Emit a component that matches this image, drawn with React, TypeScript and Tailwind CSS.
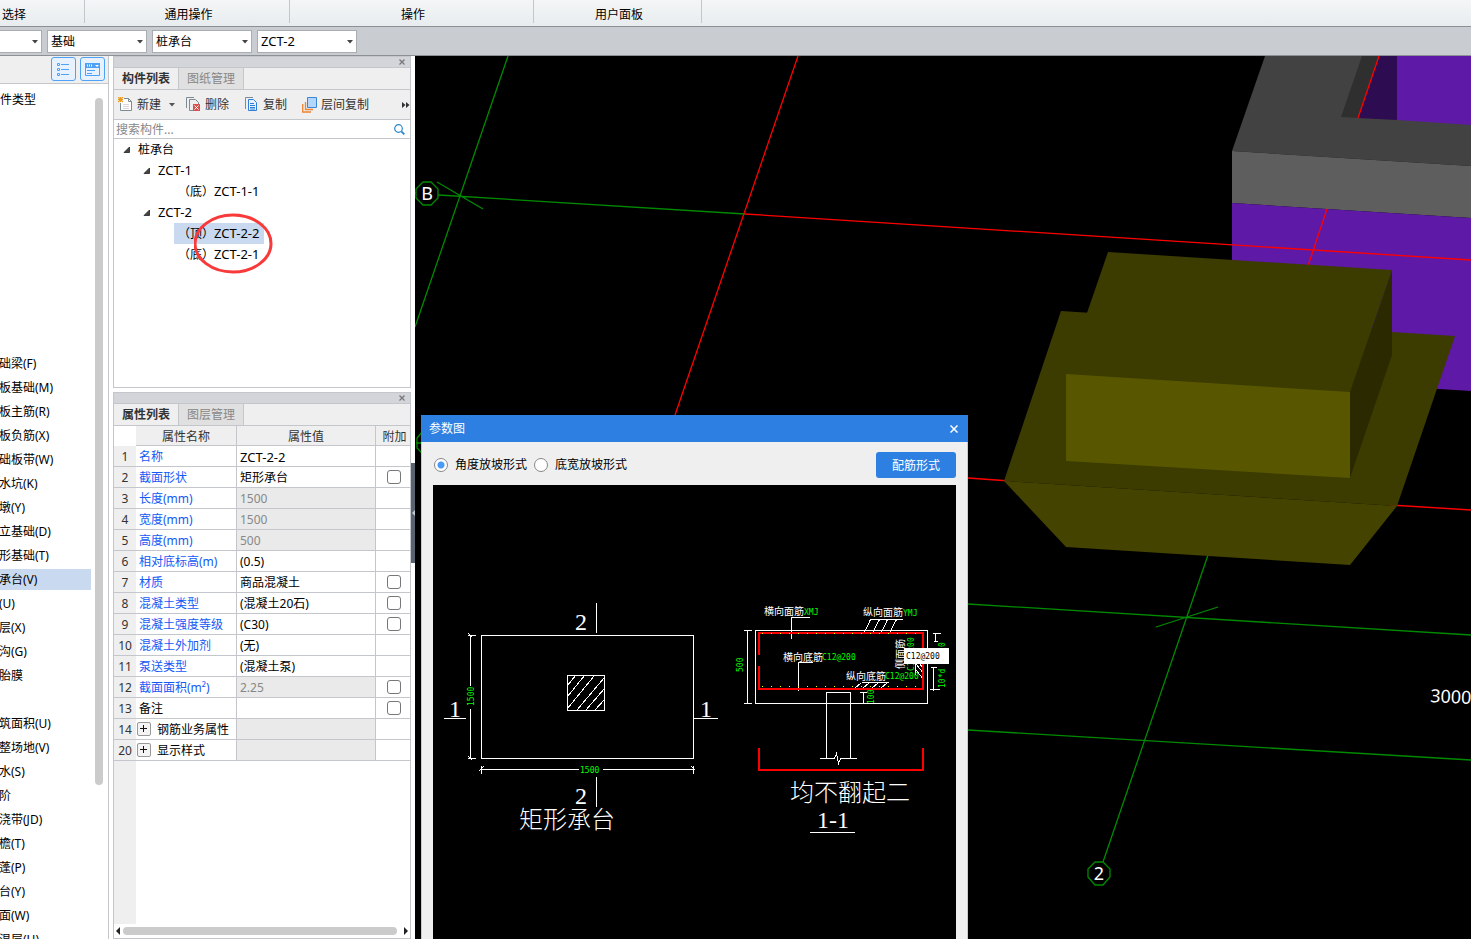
import type { ReactNode } from "react";

const ribbonGroups = [
  { name: "选择", className: "w-[85px] justify-start pl-[2px]" },
  { name: "通用操作", className: "w-[205px] justify-center pl-[3px]" },
  { name: "操作", className: "w-[244px] justify-center pl-[3px]" },
  { name: "用户面板", className: "w-[168px] justify-center pl-[3px]" },
];

const componentTypes = [
  "础梁(F)",
  "板基础(M)",
  "板主筋(R)",
  "板负筋(X)",
  "础板带(W)",
  "水坑(K)",
  "墩(Y)",
  "立基础(D)",
  "形基础(T)",
  "承台(V)",
  "(U)",
  "层(X)",
  "沟(G)",
  "胎膜",
  "",
  "筑面积(U)",
  "整场地(V)",
  "水(S)",
  "阶",
  "浇带(JD)",
  "檐(T)",
  "蓬(P)",
  "台(Y)",
  "面(W)",
  "温层(H)",
];

type Row = {
  no: number;
  name: string;
  value?: string;
  readOnly?: boolean;
  check?: boolean;
  plain?: boolean;
  group?: boolean;
};

const rows: Row[] = [
  { no: 1, name: "名称", value: "ZCT-2-2" },
  { no: 2, name: "截面形状", value: "矩形承台", check: true },
  { no: 3, name: "长度(mm)", value: "1500", readOnly: true },
  { no: 4, name: "宽度(mm)", value: "1500", readOnly: true },
  { no: 5, name: "高度(mm)", value: "500", readOnly: true },
  { no: 6, name: "相对底标高(m)", value: "(0.5)" },
  { no: 7, name: "材质", value: "商品混凝土", check: true },
  { no: 8, name: "混凝土类型", value: "(混凝土20石)", check: true },
  { no: 9, name: "混凝土强度等级", value: "(C30)", check: true },
  { no: 10, name: "混凝土外加剂", value: "(无)" },
  { no: 11, name: "泵送类型", value: "(混凝土泵)" },
  { no: 12, name: "截面面积(m²)", value: "2.25", readOnly: true, check: true },
  { no: 13, name: "备注", plain: true, check: true },
  { no: 14, name: "钢筋业务属性", readOnly: true, group: true },
  { no: 20, name: "显示样式", readOnly: true, group: true },
];

function Combo({ label, value, className }: { label: string; value: string; className: string }) {
  return (
    <div className={`relative h-[23px] ${className}`}>
      <select
        aria-label={label}
        className="block h-full w-full appearance-none border border-[#a9adb1] bg-white pl-[3px] text-black"
      >
        <option>{value}</option>
      </select>
      <svg className="pointer-events-none absolute top-[10px] right-[4px]" width="6" height="4" viewBox="0 0 6 4">
        <path d="M0 0h6L3 3.5z" fill="#444" />
      </svg>
    </div>
  );
}

function Panel({ tabs, className, children }: { tabs: string[]; className: string; children: ReactNode }) {
  return (
    <section className={`flex flex-col border border-[#c3c6cb] bg-white ${className}`}>
      <div className="flex h-[11px] flex-none items-center justify-end border-b border-[#c3c6cb] bg-[#d3d5da] pr-[5px]">
        <button type="button" aria-label="关闭" className="block">
          <svg width="6" height="6" viewBox="0 0 6 6" stroke="#777" strokeWidth="1.3">
            <path d="M.5.5l5 5M5.5.5l-5 5" />
          </svg>
        </button>
      </div>
      <div className="flex h-[22px] flex-none border-b border-[#c3c6cb] bg-[#efefef]">
        <button type="button" className="w-[65px] border-r border-[#c3c6cb] font-bold text-[#333]">
          {tabs[0]}
        </button>
        <button type="button" className="w-[65px] border-r border-[#c3c6cb] bg-[#e0e0e0] text-[#888]">
          {tabs[1]}
        </button>
      </div>
      {children}
    </section>
  );
}

function TreeArrow() {
  return (
    <svg className="mr-[7px]" width="8" height="8" viewBox="0 0 8 8">
      <path d="M6.500 1v5.500H1z" fill="#444" stroke="#222" strokeWidth=".8" />
    </svg>
  );
}

function Sidebar() {
  return (
    <aside className="flex w-[109px] flex-none flex-col border-r border-[#c3c6cb] bg-white">
      <div className="flex h-[28px] flex-none justify-end gap-[4px] border-b border-[#c3c6cb] bg-[#efefef] pt-[1px] pr-[3px]">
        <button type="button" aria-label="列表" className="flex h-[24px] w-[25px] items-center justify-center rounded-[3px] border border-[#4ea2f5] bg-[#e8f2fe]">
          <svg width="13" height="15" viewBox="0 0 13 15" fill="none" stroke="#4ea2f5">
            <path d="M.5 1.500h2v2h-2zM.5 6.500h2v2h-2zM.5 11.500h2v2h-2zM4 2.500H12M4 7.500H12M4 12.500H12" />
          </svg>
        </button>
        <button type="button" aria-label="面板" className="flex h-[24px] w-[25px] items-center justify-center rounded-[3px] border border-[#4ea2f5] bg-[#e8f2fe]">
          <svg width="15" height="13" viewBox="0 0 15 13" fill="none" stroke="#4ea2f5">
            <path d="M.5.500h14v12H.5z" />
            <path d="M0 0h15v5H0z" fill="#4ea2f5" stroke="none" />
            <path d="M2.500 1.500v2M4.500 1.500v2M6.500 1.500v2" stroke="#fff" />
            <path d="M10 2h4l-2 2z" fill="#fff" stroke="none" />
            <path d="M2 7.500h8M2 10.500h5" />
          </svg>
        </button>
      </div>
      <div className="flex min-h-0 flex-1">
        <div className="w-[91px] overflow-hidden pt-[5px]">
          <h2 className="mb-[243px] h-[21px] leading-[21px]">件类型</h2>
          <ul>
            {componentTypes.map((name, i) => (
              <li
                key={i}
                className={`mb-[3px] h-[21px] leading-[21px] whitespace-nowrap ${i === 9 ? "bg-[#c9d9f0]" : ""}`}
              >
                <span className="-ml-[1px]">{name}</span>
              </li>
            ))}
          </ul>
        </div>
        <div className="mt-[14px] ml-[4px] h-[687px] w-[8px] rounded-full bg-[#cbcbcb]" />
      </div>
    </aside>
  );
}

function ComponentToolbar() {
  return (
    <div className="flex h-[30px] flex-none items-center border-b border-[#c3c6cb] bg-[#efefef] pl-[4px] text-[#333]">
      <button type="button" className="flex items-center">
        <svg className="mr-[5px]" width="14" height="15" viewBox="0 0 14 15" fill="none">
          <path d="M6 1.500h4.500l3 3v9h-11V6" fill="#fff" stroke="#7c8b94" />
          <path d="M10.500 1.500v3h3" stroke="#7c8b94" />
          <path d="M5 7.500h6M5 9.500h6M5 11.500h6" stroke="#ddd3dc" />
          <path d="M0 0l5 5M5 0L0 5M2.500 0v5M0 2.500h5" stroke="#f09a1a" strokeWidth="1.1" />
        </svg>
        新建
        <svg className="ml-[8px]" width="6" height="4" viewBox="0 0 6 4">
          <path d="M0 0h6L3 3.500z" fill="#555" />
        </svg>
      </button>
      <button type="button" className="ml-[11px] flex items-center">
        <svg className="mr-[5px]" width="14" height="15" viewBox="0 0 14 15" fill="none">
          <path d="M.5 11V.500H8M3.500 2.500h6l3 3v8h-9z" stroke="#7c8b94" />
          <path d="M7 7h7v7H7z" fill="#d9504e" />
          <path d="M8.500 8.500l4 4M12.500 8.500l-4 4" stroke="#fff" />
        </svg>
        删除
      </button>
      <button type="button" className="ml-[16px] flex items-center">
        <svg className="mr-[5px]" width="13" height="15" viewBox="0 0 13 15" fill="none">
          <path d="M.5 12V.500H8" stroke="#7c8b94" />
          <path d="M3.500 2.500h5l3 3v8h-8z" fill="#e8f2fe" stroke="#2f7fd8" />
          <path d="M5 6.500h4M5 8.500h5M5 10.500h5M5 12h5" stroke="#2f7fd8" />
        </svg>
        复制
      </button>
      <button type="button" className="ml-[15px] flex items-center">
        <svg className="mr-[4px]" width="15" height="16" viewBox="0 0 15 16" fill="none">
          <path d="M.7 7v8H9M3.500 5v7.500H11" stroke="#ee8331" strokeWidth="1.300" />
          <path d="M5.500.500h9v10h-9z" fill="#b5d6fb" stroke="#3c86d8" />
        </svg>
        层间复制
      </button>
      <button type="button" aria-label="更多" className="ml-auto">
        <svg width="8" height="6" viewBox="0 0 8 6" fill="#333">
          <path d="M0 0l3.500 3L0 6zM4 0l3.500 3L4 6z" />
        </svg>
      </button>
    </div>
  );
}

function ComponentTree() {
  return (
    <div className="relative min-h-0 flex-1">
      <ul className="leading-[21px]">
        <li>
          <div className="flex items-center pl-[9px]">
            <TreeArrow />
            桩承台
          </div>
          <ul>
            <li>
              <div className="flex h-[21px] items-center pl-[29px]">
                <TreeArrow />
                <span className="text-[13px]">ZCT-1</span>
              </div>
              <ul className="pl-[60px]">
                <li className="flex h-[21px] w-[90px] pl-[4px] whitespace-nowrap">
                  （底）<span className="text-[13px]">ZCT-1-1</span>
                </li>
              </ul>
            </li>
            <li>
              <div className="flex h-[21px] items-center pl-[29px]">
                <TreeArrow />
                <span className="text-[13px]">ZCT-2</span>
              </div>
              <ul className="pl-[60px]">
                <li className="flex h-[21px] w-[90px] bg-[#c9d9f0] pl-[4px] whitespace-nowrap">
                  （顶）<span className="text-[13px]">ZCT-2-2</span>
                </li>
                <li className="flex h-[21px] w-[90px] pl-[4px] whitespace-nowrap">
                  （底）<span className="text-[13px]">ZCT-2-1</span>
                </li>
              </ul>
            </li>
          </ul>
        </li>
      </ul>
      <svg className="pointer-events-none absolute top-[74px] left-[80px]" width="80" height="62">
        <ellipse cx="39" cy="30.500" rx="38" ry="28.500" fill="none" stroke="#f83a3a" strokeWidth="3" />
      </svg>
    </div>
  );
}

function PropertyTable() {
  const cell = "h-[21px] border-b border-[#c3c6cb] p-0 whitespace-nowrap";
  const text = "pt-[2px] leading-[18px]";
  const head = "border-b border-[#c3c6cb] bg-[#efefef] px-0 pt-[2px] pb-0 leading-[17px] font-normal";
  return (
    <div className="flex min-h-0 flex-1 flex-col">
      <div className="flex min-h-0 flex-1 flex-col overflow-hidden">
        <table className="w-full table-fixed border-separate border-spacing-0">
          <thead>
            <tr className="text-[#333]">
              <th className="h-[20px] w-[22px] p-0" />
              <th className={`w-[101px] border-r ${head}`}>属性名称</th>
              <th className={`w-[139px] border-r ${head}`}>属性值</th>
              <th className={head}>
                <div className="pl-[3px]">附加</div>
              </th>
            </tr>
          </thead>
          <tbody>
            {rows.map((row) => (
              <tr key={row.no}>
                <td className={`${cell} bg-[#efefef] text-center text-[#333]`}>
                  <div className={text}>{row.no}</div>
                </td>
                <td className={`${cell} border-r ${row.plain || row.group ? "text-black" : "text-[#1459f5]"}`}>
                  {row.group ? (
                    <div className="flex items-center pl-[1px]">
                      <button type="button" aria-label={`展开${row.name}`} className="mr-[6px] flex h-[14px] w-[14px] items-center justify-center rounded-[2px] border border-[#999] bg-[#f4f4f4]">
                        <svg width="8" height="8" viewBox="0 0 8 8" stroke="#111">
                          <path d="M0 3.500h7M3.500 0v7" />
                        </svg>
                      </button>
                      <span className={text}>{row.name}</span>
                    </div>
                  ) : (
                    <div className={`pl-[3px] ${text}`}>{row.name}</div>
                  )}
                </td>
                <td className={`${cell} border-r ${row.readOnly ? "bg-[#eaeaea] text-[#888]" : "text-black"}`}>
                  <div className={`pl-[3px] ${text} ${row.no === 1 ? "text-[13px]" : ""}`}>{row.value}</div>
                </td>
                <td className={cell}>
                  {row.check && (
                    <input
                      type="checkbox"
                      aria-label={`附加${row.name}`}
                      className="ml-[11px] block h-[14px] w-[14px] appearance-none rounded-[3px] border border-[#777] bg-white checked:bg-[#4ea2f5]"
                    />
                  )}
                </td>
              </tr>
            ))}
          </tbody>
        </table>
        <div className="w-[22px] flex-1 bg-[#efefef]" />
      </div>
      <div className="flex h-[14px] flex-none items-center gap-[3px] px-[2px]">
        <svg width="4" height="8" viewBox="0 0 4 8">
          <path d="M4 0v8L0 4z" fill="#222" />
        </svg>
        <div className="mr-[4px] h-[8px] flex-1 rounded-full bg-[#cbcbcb]" />
        <svg width="4" height="8" viewBox="0 0 4 8">
          <path d="M0 0v8l4-4z" fill="#222" />
        </svg>
      </div>
    </div>
  );
}

// 3D view: axis grid, foundation beam and the two-step pile cap
function Scene() {
  return (
    <svg className="block h-full w-full bg-black">
      <g transform="translate(-415 -56)" strokeWidth="1.300" fill="none">
        <g stroke="#008a00">
          <path d="M508 56L415 327M415 193L439 195L745 214M437 182L483 209" />
          <path d="M968 604L1471 635M968 730L1471 760M1156 627L1218 607M1208 555L1103 862" />
          <path d="M423 182h8l7 7v9l-7 7h-8l-7-7v-9zM423 431h8l7 7v10l-7 6h-8l-6-6v-10zM416 443h6" fill="#000" />
          <path d="M1095 862h8l7 7v8l-7 8h-8l-7-8v-8z" />
        </g>
        <path d="M1265 56L1232 151L1471 166V56z" fill="#424242" />
        <path d="M1362 56L1341 117L1360 118L1380 56z" fill="#2f2f2f" />
        <path d="M1379 56L1358 118L1397 120V56z" fill="#2e0c52" />
        <path d="M1397 56V120L1471 125V56z" fill="#5e19a6" />
        <path d="M1232 151L1471 166V218L1232 203z" fill="#5e5e5e" />
        <path d="M1232 203L1471 218V391L1232 376z" fill="#5e19a6" />
        <path d="M798 56L675 415M745 214L1471 260M968 478L1010 481M1390 505L1471 510M1379 56L1358 118M1327 209L1305 275" stroke="#f00" />
        <path d="M1061 311L1455 336L1397 506L1004 481z" fill="#3d3c00" />
        <path d="M1004 481L1397 506L1350 565L1066 547z" fill="#444300" />
        <path d="M1108 252L1392 270L1350 392L1066 374z" fill="#3d3c00" />
        <path d="M1392 270V355L1350 478V392z" fill="#2a2900" />
        <path d="M1066 374L1350 392V478L1066 461z" fill="#585700" />
        <g fill="#fff" fontSize="18">
          <text x="427" y="200" textAnchor="middle">B</text>
          <text x="1099" y="880" textAnchor="middle">2</text>
          <text x="1430" y="702" transform="rotate(3 1430 702)">3000</text>
        </g>
      </g>
    </svg>
  );
}

function SectionDrawing() {
  return (
    <svg className="block h-full w-full">
      <g transform="translate(-432.5 -484.5)" fill="none" stroke="#fff" shapeRendering="crispEdges">
        {/* plan */}
        <path d="M481 635h212v123h-212zM567 675h37v35h-37z" />
        <path d="M567 685l8-10M567 696l17-21M567 708l27-33M576 710l28-33M585 710l19-22M594 710l10-11" />
        <path d="M470 635V685M470 708V758M467 635h8M467 758h8M468 633l4 4M468 756l4 4" />
        <path d="M481 769H578M602 769H693M481 765v8M693 765v8M478 771l5-5M691 766l4 4" />
        <path d="M596 602V632M596 776V806M443 718H465M693 718H717" />
        {/* section 1-1 */}
        <path d="M755 630h172v73H755zM747 630V703M743 630h8M743 703h8" />
        <path d="M791 638V617H809M798 690V662H812" />
        <path d="M870 619H902M870 619l-7 15M879 619l-8 15M887 619l-7 15M896 619l-8 15" />
        <path d="M861 682H888M861 682l-7 6M869 682l-7 6M878 682l-7 6M887 682l-7 6" />
        <path d="M915 663V674M916 664l7 9M916 670l7 9M919 663l4 5" />
        <path d="M932 633h8M935 633v8M933 641h4M930 667h6M933 667v23M929 689h10" />
        <path d="M826 758V692H850V758M863 692V703M859 692h7M861 703h6" />
        <path d="M819 758H834L836 753L838 763L840 758H856" />
        <path d="M809 832H854" />
      </g>
      <g transform="translate(-433 -485)" fill="none" shapeRendering="crispEdges">
        <path d="M759 655V633H923V689H759V666M759 748V770H923V748" stroke="#f00" strokeWidth="2" />
        <path d="M762 633.500H920M762 686.500H920" stroke="#ff0" strokeDasharray="1 8" />
      </g>
      <g transform="translate(-433 -485)" fill="#fff">
        <g fontSize="24" className="font-['Liberation_Serif','Noto_Sans_CJK_SC',serif] font-light">
          <text x="575" y="630">2</text>
          <text x="575" y="804">2</text>
          <text x="449" y="717">1</text>
          <text x="700" y="717">1</text>
          <text x="519" y="828">矩形承台</text>
          <text x="790" y="801">均不翻起二</text>
          <text x="833" y="828" textAnchor="middle">1-1</text>
        </g>
        <g fontSize="10">
          <text x="764" y="615">横向面筋</text>
          <text x="863" y="616">纵向面筋</text>
          <text x="783" y="661">横向底筋</text>
          <text x="846" y="680">纵向底筋</text>
          <text transform="translate(904 669) rotate(-90)">侧面筋</text>
        </g>
        <g fontSize="8" fill="#0f0" className="font-['DejaVu_Sans_Mono',monospace]">
          <text x="580" y="773">1500</text>
          <text transform="translate(474 706) rotate(-90)">1500</text>
          <text transform="translate(743 672) rotate(-90)">500</text>
          <text x="804" y="615">XMJ</text>
          <text x="903" y="616">YMJ</text>
          <text x="822" y="660">C12@200</text>
          <text x="885" y="679">C12@200</text>
          <text transform="translate(914 671) rotate(-90)">C12@200</text>
          <text transform="translate(945 688) rotate(-90)">10*d</text>
          <text transform="translate(945 647) rotate(-90)">0</text>
          <text transform="translate(874 704) rotate(-90)">100</text>
        </g>
      </g>
    </svg>
  );
}

function ParameterDialog() {
  const radio =
    "h-[14px] w-[14px] appearance-none rounded-full border border-[#888] bg-white checked:bg-[radial-gradient(circle,#4a9bf5_3px,white_4px)]";
  return (
    <div
      role="dialog"
      aria-label="参数图"
      className="absolute top-[359px] bottom-0 left-[6px] flex w-[547px] flex-col border-x border-[#c5cad6] bg-[#efefef]"
    >
      <div className="-mx-px flex h-[27px] flex-none items-center justify-between bg-[#2d7fe2] pr-[10px] pl-[8px] text-white">
        <span>参数图</span>
        <button type="button" aria-label="关闭">
          <svg width="8" height="8" viewBox="0 0 8 8" stroke="#fff" strokeWidth="1.500">
            <path d="M.5.500l7 7M7.500.500l-7 7" />
          </svg>
        </button>
      </div>
      <div className="flex h-[43px] flex-none items-center pt-[3px] pr-[11px] pl-[12px]">
        <label className="flex items-center gap-[7px]">
          <input type="radio" name="slope" defaultChecked className={radio} />
          角度放坡形式
        </label>
        <label className="ml-[7px] flex items-center gap-[7px]">
          <input type="radio" name="slope" className={radio} />
          底宽放坡形式
        </label>
        <button type="button" className="ml-auto h-[26px] w-[80px] rounded-[3px] bg-[#2d7fe2] pt-[1px] text-white">
          配筋形式
        </button>
      </div>
      <div className="relative mr-[11px] ml-[11px] min-h-0 flex-1 bg-black">
        <SectionDrawing />
        <input
          aria-label="侧面筋"
          defaultValue="C12@200"
          className="absolute top-[163px] left-[471px] h-[16px] w-[45px] bg-white pl-[2px] font-['DejaVu_Sans_Mono',monospace] text-[8px] text-black"
        />
      </div>
    </div>
  );
}

export default function App() {
  return (
    <div className="flex h-screen flex-col overflow-hidden bg-white font-['Noto_Sans','Noto_Sans_CJK_SC',sans-serif] text-xs text-black">
      <header className="flex h-[27px] flex-none border-b border-[#8d9196] bg-linear-to-b from-[#f4f6f7] to-[#e8ecee]">
        {ribbonGroups.map((group) => (
          <div key={group.name} className={`mb-[3px] flex border-r border-[#c3c6cb] pt-[6px] leading-[18px] ${group.className}`}>
            {group.name}
          </div>
        ))}
      </header>
      <div className="flex h-[29px] flex-none gap-[5px] border-b border-[#8d9196] bg-[#c9ccd1] pt-[3px]">
        <Combo label="楼层" value="" className="-ml-[2px] w-[44px]" />
        <Combo label="类别" value="基础" className="w-[100px]" />
        <Combo label="构件类型" value="桩承台" className="w-[100px]" />
        <Combo label="构件" value="ZCT-2" className="w-[100px] text-[13px]" />
      </div>
      <div className="flex min-h-0 flex-1">
        <Sidebar />
        <div className="ml-[4px] flex w-[298px] flex-none flex-col gap-[4px]">
          <Panel tabs={["构件列表", "图纸管理"]} className="h-[332px] flex-none">
            <ComponentToolbar />
            <div className="flex h-[19px] flex-none items-center border-b border-[#c3c6cb] pr-[5px] pl-[2px]">
              <input
                type="text"
                aria-label="搜索构件"
                placeholder="搜索构件..."
                className="min-w-0 flex-1 pt-[1px] leading-[17px] outline-none placeholder:text-[#888]"
              />
              <svg width="11" height="11" viewBox="0 0 11 11" fill="none" stroke="#2a86c8">
                <circle cx="4.500" cy="4.500" r="3.800" strokeWidth="1.200" />
                <path d="M7.300 7.300L10.300 10.300" strokeWidth="1.800" />
              </svg>
            </div>
            <ComponentTree />
          </Panel>
          <Panel tabs={["属性列表", "图层管理"]} className="min-h-0 flex-1">
            <PropertyTable />
          </Panel>
        </div>
        <div className="w-[4px] flex-none">
          <button type="button" aria-label="收起" className="mt-[407px] flex h-[100px] w-[4px] items-center justify-end bg-[#5a6470]">
            <svg width="3" height="6" viewBox="0 0 3 6">
              <path d="M3 0v6L0 3z" fill="#c3c9d0" />
            </svg>
          </button>
        </div>
        <main className="relative min-w-0 flex-1 overflow-hidden bg-black">
          <Scene />
          <ParameterDialog />
        </main>
      </div>
    </div>
  );
}
